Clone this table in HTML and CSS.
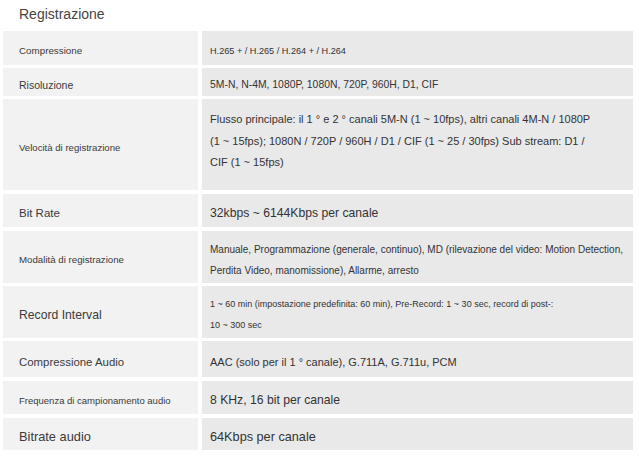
FILE: index.html
```html
<!DOCTYPE html>
<html lang="it">
<head>
<meta charset="utf-8">
<title>Registrazione</title>
<link rel="stylesheet" href="styles.css">
</head>
<body>
<div class="spec">
  <h2 class="spec-title">Registrazione</h2>
  <div class="spec-table">
    <div class="row r1">
      <div class="key k-10">Compressione</div>
      <div class="val v-9">H.265 + / H.265 / H.264 + / H.264</div>
    </div>
    <div class="row r2">
      <div class="key k-105">Risoluzione</div>
      <div class="val v-10">5M-N, N-4M, 1080P, 1080N, 720P, 960H, D1, CIF</div>
    </div>
    <div class="row r3">
      <div class="key k-96">Velocità di registrazione</div>
      <div class="val v-11 top">Flusso principale: il 1 ° e 2 ° canali 5M-N (1 ~ 10fps), altri canali 4M-N / 1080P (1 ~ 15fps); 1080N / 720P / 960H / D1 / CIF (1 ~ 25 / 30fps) Sub stream: D1 / CIF (1 ~ 15fps)</div>
    </div>
    <div class="row r4">
      <div class="key k-115">Bit Rate</div>
      <div class="val v-12">32kbps ~ 6144Kbps per canale</div>
    </div>
    <div class="row r5">
      <div class="key k-97">Modalità di registrazione</div>
      <div class="val v-mode">Manuale, Programmazione (generale, continuo), MD (rilevazione del video: Motion Detection, Perdita Video, manomissione), Allarme, arresto</div>
    </div>
    <div class="row r6">
      <div class="key k-12">Record Interval</div>
      <div class="val v-rec">1 ~ 60 min (impostazione predefinita: 60 min), Pre-Record: 1 ~ 30 sec, record di post-: 10 ~ 300 sec</div>
    </div>
    <div class="row r7">
      <div class="key k-114">Compressione Audio</div>
      <div class="val v-11s">AAC (solo per il 1 ° canale), G.711A, G.711u, PCM</div>
    </div>
    <div class="row r8">
      <div class="key k-95">Frequenza di campionamento audio</div>
      <div class="val v-12">8 KHz, 16 bit per canale</div>
    </div>
    <div class="row r9">
      <div class="key k-125">Bitrate audio</div>
      <div class="val v-127">64Kbps per canale</div>
    </div>
  </div>
</div>
</body>
</html>
```
FILE: styles.css
```css
html, body {
  margin: 0;
  padding: 0;
  background: #ffffff;
}

body {
  font-family: "Liberation Sans", Arial, sans-serif;
  color: #333333;
}

.spec {
  padding: 0 6px 0 3px;
}

.spec-title {
  margin: 0;
  height: 30px;
  padding: 1px 0 0 16px;
  font-size: 14px;
  font-weight: normal;
  line-height: 26px;
  color: #444444;
}

.spec-table {
  display: flex;
  flex-direction: column;
  gap: 4px;
}

.row {
  display: grid;
  grid-template-columns: 195px 431px;
  column-gap: 4px;
}

.r1 { height: 34px; }
.r2 { height: 28px; margin-top: -1px; }
.r3 { height: 91px; margin-top: -1px; }
.r4 { height: 33px; }
.r5 { height: 52px; }
.r6 { height: 52px; margin-top: -1px; }
.r7 { height: 36px; margin-top: -1px; }
.r8 { height: 33px; }
.r9 { height: 32px; }

.key,
.val {
  display: flex;
  align-items: center;
  padding-top: 5px;
}

.key {
  background: #f2f2f2;
  padding-left: 16px;
  color: #3a3a3a;
}

.val {
  background: #e9e9ea;
  padding-left: 8px;
  padding-right: 12px;
  color: #333333;
}

.val.top {
  align-items: flex-start;
  padding-top: 10px;
  padding-right: 33px;
}

.k-95 { font-size: 9.5px; }
.k-96 { font-size: 9.6px; }
.k-97 { font-size: 9.7px; }
.k-10 { font-size: 9.8px; }
.k-105 { font-size: 10.5px; }
.k-114 { font-size: 11.4px; }
.k-115 { font-size: 11.5px; }
.k-12 { font-size: 12.2px; }
.k-125 { font-size: 12.8px; }

.v-9 { font-size: 9.15px; }
.v-10 { font-size: 10.4px; }
.v-11 { font-size: 11px; line-height: 21.5px; }
.v-mode { font-size: 10px; line-height: 21px; padding-right: 6px; }
.v-rec { font-size: 9px; line-height: 21px; padding-right: 75px; }
.v-11s { font-size: 11px; }
.v-12 { font-size: 12.2px; }
.v-127 { font-size: 12.7px; }
```
